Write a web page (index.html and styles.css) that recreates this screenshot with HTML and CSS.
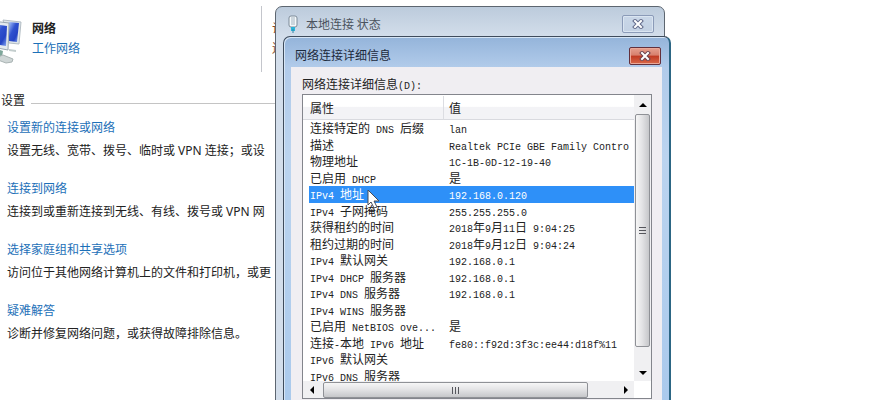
FILE: index.html
```html
<!DOCTYPE html>
<html lang="zh-CN">
<head>
    <meta charset="UTF-8">
    <meta name="viewport" content="width=device-width, initial-scale=1.0">
    <title>网络连接详细信息</title>
    <link rel="stylesheet" href="styles.css">
</head>
<body>
    <main class="center">
        <div class="network">
            <svg class="network-icon" width="22" height="46" viewBox="0 0 22 46" aria-hidden="true">
                <defs>
                    <linearGradient id="screen" x1="0" y1="0" x2="1" y2="1">
                        <stop offset="0" stop-color="#a9c4fb"/>
                        <stop offset="0.4" stop-color="#2f52cf"/>
                        <stop offset="0.7" stop-color="#2444c4"/>
                        <stop offset="1" stop-color="#8fb0f5"/>
                    </linearGradient>
                </defs>
                <path d="M9 30l7 1v2l-7-1z" fill="#c3cdcd"/>
                <path d="M3 1l18 2-2 22-10-1z" fill="#dfe6ea" stroke="#b4bec5"/>
                <path d="M9 3l10 1-2 19-8-1z" fill="url(#screen)"/>
                <path d="M-8 2l17 2-1 27-16-3z" fill="#e4eaee" stroke="#9aa7b0"/>
                <path d="M-6 5l13 2-1 20-12-2z" fill="url(#screen)"/>
                <path d="M0 31l3 1-1 6-4 1z" fill="#7fa79b"/>
                <path d="M-2 38l5-2 10 4-1 3-6 1-8-3z" fill="#cfd6d6" stroke="#a9b3b3"/>
            </svg>
            <div class="network-name">
                <strong>网络</strong>
                <a href="#">工作网络</a>
            </div>
            <div class="network-access">
                <span>访</span>
                <span>连</span>
            </div>
        </div>
        <h2>设置</h2>
        <ul class="tasks">
            <li>
                <a href="#">设置新的连接或网络</a>
                <p>设置无线、宽带、拨号、临时或 VPN 连接；或设</p>
            </li>
            <li>
                <a href="#">连接到网络</a>
                <p>连接到或重新连接到无线、有线、拨号或 VPN 网</p>
            </li>
            <li>
                <a href="#">选择家庭组和共享选项</a>
                <p>访问位于其他网络计算机上的文件和打印机，或更</p>
            </li>
            <li>
                <a href="#">疑难解答</a>
                <p>诊断并修复网络问题，或获得故障排除信息。</p>
            </li>
        </ul>
    </main>

    <section class="window status">
        <header>
            <svg width="10" height="18" viewBox="0 0 10 18" aria-hidden="true">
                <rect x="1" y="1" width="8" height="11" rx="2" fill="#f4f8fa" stroke="#7d8b99"/>
                <path d="M4 2v8M6 2v8" stroke="#a5b4c0"/>
                <path d="M3 12h4v4h-4z" fill="#2cb4d8"/>
                <path d="M5 14v4" stroke="#2f86a8"/>
            </svg>
            <h1>本地连接 状态</h1>
            <button class="close" aria-label="关闭">
                <svg width="12" height="10" viewBox="0 0 12 10" aria-hidden="true">
                    <path d="M3 2l6 6M9 2l-6 6" stroke="#646c8c" stroke-width="4" stroke-linecap="square"/>
                    <path d="M3 2l6 6M9 2l-6 6" stroke="#fff" stroke-width="2" stroke-linecap="square"/>
                </svg>
            </button>
        </header>
    </section>

    <section class="window details">
        <header>
            <h1>网络连接详细信息</h1>
            <button class="close" aria-label="关闭">
                <svg width="12" height="10" viewBox="0 0 12 10" aria-hidden="true">
                    <path d="M3 2l6 6M9 2l-6 6" stroke="#6e4450" stroke-width="4" stroke-linecap="square"/>
                    <path d="M3 2l6 6M9 2l-6 6" stroke="#fff" stroke-width="2" stroke-linecap="square"/>
                </svg>
            </button>
        </header>
        <div class="client">
            <p class="caption" id="caption">网络连接详细信息<span class="en">(D):</span></p>
            <div class="list">
                <div class="rows">
                    <table aria-labelledby="caption">
                        <thead>
                            <tr><th>属性</th><th>值</th></tr>
                        </thead>
                        <tbody>
                            <tr><td>连接特定的<span class="en"> DNS </span>后缀</td><td><span class="en">lan</span></td></tr>
                            <tr><td>描述</td><td><span class="en">Realtek PCIe GBE Family Contro</span></td></tr>
                            <tr><td>物理地址</td><td><span class="en">1C-1B-0D-12-19-40</span></td></tr>
                            <tr><td>已启用<span class="en"> DHCP</span></td><td>是</td></tr>
                            <tr class="selected"><td><span class="en">IPv4 </span>地址</td><td><span class="en">192.168.0.120</span></td></tr>
                            <tr><td><span class="en">IPv4 </span>子网掩码</td><td><span class="en">255.255.255.0</span></td></tr>
                            <tr><td>获得租约的时间</td><td><span class="en">2018</span>年<span class="en">9</span>月<span class="en">11</span>日<span class="en"> 9:04:25</span></td></tr>
                            <tr><td>租约过期的时间</td><td><span class="en">2018</span>年<span class="en">9</span>月<span class="en">12</span>日<span class="en"> 9:04:24</span></td></tr>
                            <tr><td><span class="en">IPv4 </span>默认网关</td><td><span class="en">192.168.0.1</span></td></tr>
                            <tr><td><span class="en">IPv4 DHCP </span>服务器</td><td><span class="en">192.168.0.1</span></td></tr>
                            <tr><td><span class="en">IPv4 DNS </span>服务器</td><td><span class="en">192.168.0.1</span></td></tr>
                            <tr><td><span class="en">IPv4 WINS </span>服务器</td><td></td></tr>
                            <tr><td>已启用<span class="en"> NetBIOS ove...</span></td><td>是</td></tr>
                            <tr><td>连接<span class="en">-</span>本地<span class="en"> IPv6 </span>地址</td><td><span class="en">fe80::f92d:3f3c:ee44:d18f%11</span></td></tr>
                            <tr><td><span class="en">IPv6 </span>默认网关</td><td></td></tr>
                            <tr><td><span class="en">IPv6 DNS </span>服务器</td><td></td></tr>
                        </tbody>
                    </table>
                </div>
                <div class="scroll vertical">
                    <button aria-label="向上"><svg width="8" height="4" viewBox="0 0 8 4"><path d="M0 4L4 0l4 4z"/></svg></button>
                    <div class="thumb"><i></i><i></i><i></i></div>
                    <button aria-label="向下"><svg width="8" height="4" viewBox="0 0 8 4"><path d="M0 0h8L4 4z"/></svg></button>
                </div>
                <div class="scroll horizontal">
                    <button aria-label="向左"><svg width="4" height="8" viewBox="0 0 4 8"><path d="M4 0v8L0 4z"/></svg></button>
                    <div class="thumb"><i></i><i></i><i></i></div>
                    <button aria-label="向右"><svg width="4" height="8" viewBox="0 0 4 8"><path d="M0 0l4 4-4 4z"/></svg></button>
                </div>
            </div>
        </div>
    </section>

    <svg class="pointer" width="13" height="20" viewBox="0 0 13 20" aria-hidden="true">
        <path d="M1 1v15l3-3 3 6 3-1-3-6h5z" fill="#fff" stroke="#4a4a55"/>
    </svg>
</body>
</html>
```
FILE: styles.css
```css
* {
    box-sizing: border-box;
}
body {
    position: relative;
    height: 100vh;
    margin: 0;
    overflow: hidden;
    background-color: #fff;
    color: #222;
    font-family: "Noto Sans CJK SC", sans-serif;
    font-size: 12px;
    line-height: 20px;
}
h1, h2, p, ul {
    margin: 0;
    padding: 0;
    font-size: 12px;
    font-weight: normal;
    list-style: none;
}
a {
    color: #1c70b8;
    text-decoration: none;
}
a:hover {
    text-decoration: underline;
}

/* network and sharing center */
.center {
    width: 275px;
    padding-top: 6px;
    overflow: hidden;
    white-space: nowrap;
}
.network {
    display: flex;
    height: 66px;
}
.network-icon {
    margin-top: 13px;
}
.network-name {
    display: flex;
    flex-direction: column;
    flex: 1;
    padding: 12px 0 0 10px;
    border-right: 1px solid #c4c6cc;
}
.network-access {
    display: flex;
    flex-direction: column;
    width: 13px;
    padding: 12px 0 0 10px;
    color: #8a4a28;
}
.center h2 {
    display: flex;
    align-items: center;
    gap: 6px;
    margin: 18px 0 0 1px;
}
.center h2::after {
    content: "";
    flex: 1;
    height: 1px;
    margin-top: 6px;
    background-color: #c4c4c4;
}
.tasks {
    padding: 6px 0 0 7px;
    font-family: "Noto Sans", "Noto Sans CJK SC", sans-serif;
}
.tasks li {
    margin-bottom: 15px;
}
.tasks a {
    display: block;
    line-height: 23px;
}
.tasks p {
    line-height: 23px;
}

/* windows */
.window {
    position: absolute;
    bottom: -20px;
    border: 1px solid #3f4c5c;
    border-radius: 7px;
}
.window header {
    display: flex;
    align-items: center;
    height: 30px;
}
.window h1 {
    flex: 1;
}
.status {
    top: 6px;
    left: 275px;
    width: 390px;
    padding: 2px 10px 0 12px;
    background: linear-gradient(#bccbdc, #d3deeb 30px, #d3deeb);
    border-color: #5d6670;
}
.status h1 {
    padding-left: 8px;
    color: #4b535e;
}
.details {
    top: 36px;
    left: 283px;
    width: 388px;
    padding: 0 7px;
    background: linear-gradient(#94b4da, #b1cbea 30px, #bbd4ef 120px, #a9c9ec);
    border-right: 2px solid #2c6684;
    box-shadow: inset 1px 1px #d6e5f5;
}
.details h1 {
    padding-left: 4px;
    padding-top: 6px;
    color: #1c2a3c;
}
.close {
    display: flex;
    align-items: center;
    justify-content: center;
    width: 32px;
    height: 18px;
    padding: 0;
    border: 1px solid #8b9bb8;
    border-radius: 2px;
    background: linear-gradient(#c9d7e8, #c3d1e3);
    box-shadow: inset 0 0 0 1px #dae5f1;
}
.details .close {
    margin: 7px 1px 0 0;
    border-color: #63303c;
    background: linear-gradient(#e5a08f, #d77f6c 45%, #c03a22 50%, #d9694a);
    box-shadow: inset 0 0 0 1px #eba898;
}
.client {
    padding: 7px 10px 0 11px;
    background-color: #f0eef2;
    height: calc(100% - 30px);
}
.caption {
    line-height: 20px;
}

/* connection details */
.list {
    display: grid;
    grid-template-columns: 1fr 17px;
    grid-template-rows: 286px 17px;
    border: 1px solid #83858c;
    background-color: #fff;
}
.rows {
    overflow: hidden;
    padding-top: 1px;
}
table {
    width: 100%;
    height: 288px;
    table-layout: fixed;
    border-spacing: 0;
    white-space: nowrap;
    line-height: 16px;
}
th, td {
    padding: 0 0 0 5px;
    overflow: hidden;
    text-align: left;
    font-weight: normal;
}
th {
    height: 24px;
    border-bottom: 1px solid #d9dadf;
    background: linear-gradient(#fff 45%, #f3f3f6 50%, #f3f3f6);
}
th:first-child {
    width: 140px;
    padding-left: 7px;
}
th + th {
    border-left: 1px solid #dcdde2;
}
td:first-child {
    border-left: 6px solid #fff;
    padding-left: 1px;
}
td + td {
    padding-left: 6px;
}
.en {
    font-family: "Liberation Mono", monospace;
    font-size: 10px;
    line-height: 0;
    white-space: pre;
}
.selected td {
    color: #fff;
    background-color: #2e90f8;
    background-clip: padding-box;
}

.scroll {
    display: flex;
    background-color: #f0f0f2;
}
.scroll button {
    display: flex;
    align-items: center;
    justify-content: center;
    width: 17px;
    height: 17px;
    padding: 0;
    border: 0;
    background: none;
}
.thumb {
    display: flex;
    align-items: center;
    justify-content: center;
    gap: 2px;
    border: 1px solid #8f9196;
    border-radius: 2px;
}
.thumb i {
    background-color: #55565c;
}
.vertical {
    flex-direction: column;
    justify-content: space-between;
    padding: 1px 1px 0 0;
}
.vertical .thumb {
    flex-direction: column;
    width: 15px;
    height: 233px;
    margin: 1px 0 auto 1px;
    background: linear-gradient(to right, #f6f6f6, #e4e4e6 45%, #c6c7ca);
}
.vertical .thumb i {
    width: 7px;
    height: 1px;
}
.horizontal .thumb {
    width: 265px;
    margin: 1px auto 0 3px;
    background: linear-gradient(#f6f6f6, #e4e4e6 45%, #c6c7ca);
}
.horizontal .thumb i {
    width: 1px;
    height: 7px;
}

.pointer {
    position: absolute;
    top: 189px;
    left: 367px;
}
```
